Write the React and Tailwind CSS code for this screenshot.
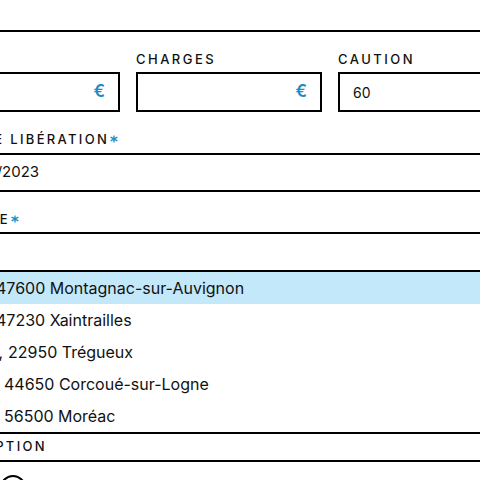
import React from "react";

const ACCENT = "text-[#1b8cc5]";

const Asterisk = () => (
  <svg
    viewBox="0 0 10 10"
    className={`${ACCENT} inline-block w-[8px] h-[8px] ml-[1px] -mt-[2px] align-middle`}
    fill="none"
    stroke="currentColor"
    strokeWidth="1.6"
  >
    <path d="M5 0.5v9M0.8 2.6l8.4 4.8M0.8 7.4l8.4-4.8" />
  </svg>
);

const MoneyField = ({ label, value, suffix }) => (
  <div className="flex flex-col">
    <span className="h-4 text-[13px] leading-4 font-medium tracking-[0.19em] uppercase">
      {label}
    </span>
    <div className="mt-[5px] h-[40px] border-2 border-black flex items-center pl-[13px] pr-[13px]">
      <span className="flex-1 text-[14px]">{value}</span>
      {suffix && (
        <span className={`${ACCENT} text-[17px] font-semibold`}>{suffix}</span>
      )}
    </div>
  </div>
);

const FieldLabel = ({ children, required, className }) => (
  <div className={`h-4 text-[13px] leading-4 font-medium tracking-[0.18em] uppercase ${className}`}>
    {children}
    {required && <Asterisk />}
  </div>
);

const SUGGESTIONS = [
  { street: "12 Lieu-dit Larroque,", rest: "47600 Montagnac-sur-Auvignon", w: "w-[44px]" },
  { street: "3 Route de Lavardac,", rest: "47230 Xaintrailles", w: "w-[44px]" },
  { street: "Rue de la Ville Hervé,", rest: "22950 Trégueux", w: "w-[56px]" },
  { street: "La Grande Noë,", rest: "44650 Corcoué-sur-Logne", w: "w-[52px]" },
  { street: "Le Bourg,", rest: "56500 Moréac", w: "w-[52px]" },
];

export default function App() {
  return (
    <div
      className="w-[480px] h-[480px] overflow-hidden bg-white text-[#111]"
      style={{ fontFamily: "Inter, 'Liberation Sans', sans-serif" }}
    >
      <div className="-ml-[66px] w-[620px]">
        <div className="h-[30px]" />
        <div className="border-t-2 border-black pt-[19px]">
          <div className="grid grid-cols-[186px_186px_186px] gap-x-4">
            <MoneyField label="Loyer" value="" suffix="€" />
            <MoneyField label="Charges" value="" suffix="€" />
            <MoneyField label="Caution" value="60" />
          </div>
        </div>

        <FieldLabel required className="mt-[19px]">
          Date de libération
        </FieldLabel>
        <div className="mt-[6px] h-[39px] border-y-2 border-black flex items-center pl-[24px] text-[15px]">
          01/07/2023
        </div>

        <FieldLabel required className="mt-[19px]">
          Adresse
        </FieldLabel>
        <div className="mt-[5px] h-[40px] border-y-2 border-black" />

        <ul className="border-b-2 border-black">
          {SUGGESTIONS.map((s, i) => (
            <li
              key={s.rest}
              className={`h-[32px] flex items-center pl-[13px] text-[16px] whitespace-nowrap ${
                i === 0 ? "bg-[#c3e8fa]" : ""
              }`}
            >
              <span className={`inline-flex justify-end ${s.w} overflow-hidden mr-[5px]`}>
                <span className="shrink-0">{s.street}</span>
              </span>
              <span>{s.rest}</span>
            </li>
          ))}
        </ul>

        <div className="h-[26px] flex items-center text-[13px] font-medium tracking-[0.18em] uppercase">
          Description
        </div>
        <div className="border-t-2 border-black pt-[13px]">
          <div className="ml-[66px] w-[26px] h-[26px] rounded-full border-2 border-black" />
        </div>
      </div>
    </div>
  );
}
